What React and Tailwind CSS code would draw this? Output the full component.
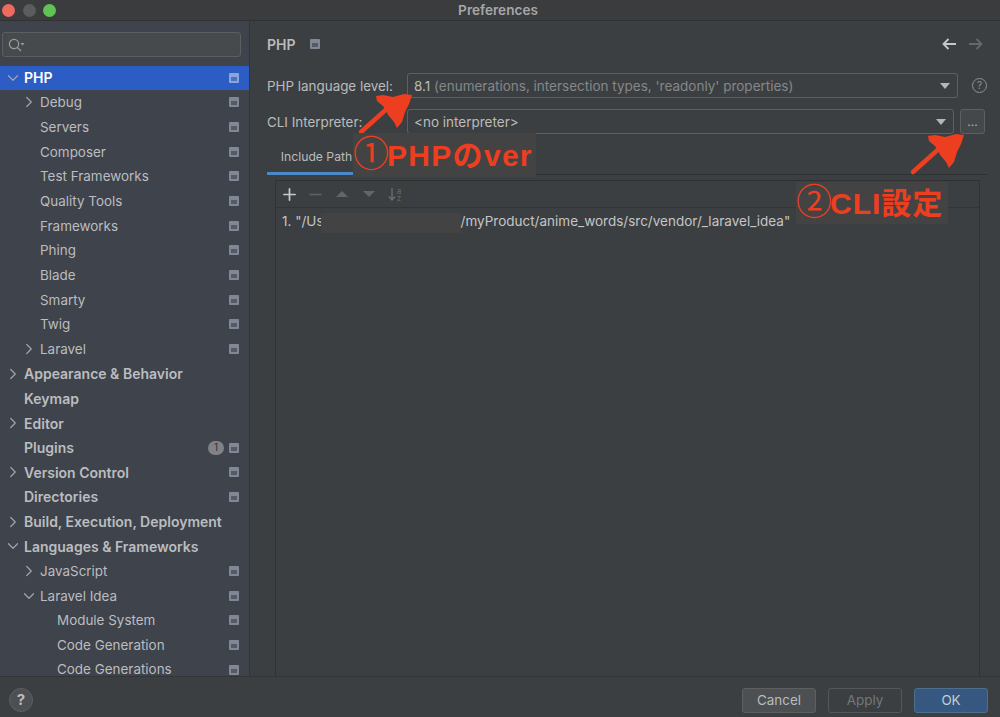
import React from "react";
import { ChevronDown, ChevronRight, Plus, Minus } from "lucide-react";

const rows = [
  { label: "PHP", depth: 0, open: true, bold: true, selected: true, page: true },
  { label: "Debug", depth: 1, closed: true, page: true },
  { label: "Servers", depth: 1, page: true },
  { label: "Composer", depth: 1, page: true },
  { label: "Test Frameworks", depth: 1, page: true },
  { label: "Quality Tools", depth: 1, page: true },
  { label: "Frameworks", depth: 1, page: true },
  { label: "Phing", depth: 1, page: true },
  { label: "Blade", depth: 1, page: true },
  { label: "Smarty", depth: 1, page: true },
  { label: "Twig", depth: 1, page: true },
  { label: "Laravel", depth: 1, closed: true, page: true },
  { label: "Appearance & Behavior", depth: 0, closed: true, bold: true },
  { label: "Keymap", depth: 0, bold: true },
  { label: "Editor", depth: 0, closed: true, bold: true },
  { label: "Plugins", depth: 0, bold: true, page: true, badge: "1" },
  { label: "Version Control", depth: 0, closed: true, bold: true, page: true },
  { label: "Directories", depth: 0, bold: true, page: true },
  { label: "Build, Execution, Deployment", depth: 0, closed: true, bold: true },
  { label: "Languages & Frameworks", depth: 0, open: true, bold: true },
  { label: "JavaScript", depth: 1, closed: true, page: true },
  { label: "Laravel Idea", depth: 1, open: true, page: true },
  { label: "Module System", depth: 2, page: true },
  { label: "Code Generation", depth: 2, page: true },
  { label: "Code Generations", depth: 2, page: true },
];

const PageIcon = ({ selected }) => (
  <span className={`flex h-[10px] w-[10px] items-center justify-center rounded-[1px] ${selected ? "bg-[#8ba5dc]" : "bg-[#7f8894]"}`}>
    <span className={`mt-[2px] h-[4px] w-[6px] ${selected ? "bg-[#4a72c8]" : "bg-[#555a64]"}`} />
  </span>
);

const TreeRow = ({ row }) => {
  const pad = row.depth === 0 ? "pl-[24px]" : row.depth === 1 ? "pl-[40px]" : "pl-[57px]";
  const arrow = row.depth === 0 ? "left-[4px]" : "left-[20px]";
  return (
    <div className={`relative flex h-[24.67px] shrink-0 items-center pr-[10px] ${pad} ${row.selected ? "bg-[#2c5dc4] text-white" : "text-[#bbbdc0]"}`}>
      {row.open && <ChevronDown size={18} strokeWidth={1.6} className={`absolute ${arrow} text-[#a0a4ab]`} />}
      {row.closed && <ChevronRight size={18} strokeWidth={1.6} className={`absolute ${arrow} text-[#a0a4ab]`} />}
      <span className={`flex-1 whitespace-nowrap ${row.bold ? "text-[14px] font-semibold" : "text-[13.45px]"}`}>{row.label}</span>
      {row.badge && (
        <span className="mr-[5px] flex h-[14px] w-[16px] items-center justify-center rounded-full bg-[#7f8389] text-[10px] text-[#2f3136]">
          {row.badge}
        </span>
      )}
      {row.page && <PageIcon selected={row.selected} />}
    </div>
  );
};

const Select = ({ children, className }) => (
  <div className={`flex h-[25px] items-center rounded-[3px] border border-[#5e6060] bg-[#3c3f41] pl-[6px] pr-[7px] text-[13.5px] ${className}`}>
    <span className="flex-1 whitespace-nowrap pt-[1px]">{children}</span>
    <span className="h-0 w-0 border-x-[5px] border-t-[6px] border-x-transparent border-t-[#b4b6b8]" />
  </div>
);

const NavArrow = ({ className, back }) => (
  <svg width="14" height="12" viewBox="0 0 14 12" fill="none" stroke="currentColor" strokeWidth="1.8" className={className}>
    {back ? <path d="M14 6H1.5 M6.5 1L1.5 6l5 5" /> : <path d="M0 6h12.5 M7.5 1l5 5-5 5" />}
  </svg>
);

// scribbled red arrow, tip at the top right
const RedArrow = ({ className }) => (
  <svg viewBox="0 0 60 44" className={`absolute h-[44px] w-[60px] ${className}`}>
    <path d="M5 40 L34 14" stroke="#ee3e20" strokeWidth="4.5" strokeLinecap="round" fill="none" />
    <path d="M20 4 L27 3 L37 5 L48 2 L56 3 L53 12 L49 20 L46 30 L41 36 L38 30 L33 24 L27 14 L21 9 Z" fill="#ee3e20" />
  </svg>
);

export default function App() {
  return (
    <div className="relative flex h-[717px] w-[1000px] flex-col overflow-hidden bg-[#3c3f41] font-['Inter',sans-serif] text-[#bbbbbb]">
      {/* title bar */}
      <div className="relative flex h-[21px] shrink-0 items-center justify-center border-b border-[#2f3133] bg-[#3a3c3e] pr-[4px]">
        <div className="absolute left-[2px] top-[3.5px] flex gap-[7.5px]">
          <span className="h-[13px] w-[13px] rounded-full bg-[#ee6a5e]" />
          <span className="h-[13px] w-[13px] rounded-full bg-[#5a5c5e]" />
          <span className="h-[13px] w-[13px] rounded-full bg-[#5fc454]" />
        </div>
        <span className="text-[13.6px] font-semibold text-[#a5a7a9]">Preferences</span>
      </div>

      <div className="flex min-h-0 flex-1">
        {/* sidebar */}
        <aside className="flex w-[250px] shrink-0 flex-col overflow-hidden border-r border-[#323436] bg-[#3f434b]">
          <div className="px-[2px] pb-[8.5px] pt-[11px]">
            <div className="flex h-[25px] w-[239px] items-center rounded-[3px] border border-[#5c5f60] bg-[#474a4c] pl-[5px]">
              <svg width="17" height="14" viewBox="0 0 17 14" fill="none" stroke="#9a9da0" strokeWidth="1.2">
                <circle cx="6" cy="6" r="4.6" />
                <path d="M9.5 9.5 L13 13" />
                <path d="M12.5 5 h4 l-2 2.5 z" fill="#9a9da0" stroke="none" />
              </svg>
            </div>
          </div>
          {rows.map((row) => (
            <TreeRow key={row.label} row={row} />
          ))}
        </aside>

        {/* main panel */}
        <main className="flex min-w-0 flex-1 flex-col pl-[17px] pr-[12px] pt-[13px]">
          <div className="flex h-[20px] items-center">
            <span className="text-[14px] font-semibold">PHP</span>
            <span className="ml-[14px]"><PageIcon /></span>
            <NavArrow back className="ml-auto text-[#c8c9ca]" />
            <NavArrow className="ml-[13px] mr-[5px] text-[#66686a]" />
          </div>

          <div className="mt-[19px] flex items-center">
            <span className="w-[140px] whitespace-nowrap pt-[1px] text-[13.4px]">PHP language level:</span>
            <Select className="w-[551px]">
              <span>8.1</span> <span className="text-[#85878a]">(enumerations, intersection types, 'readonly' properties)</span>
            </Select>
            <span className="ml-[14px] flex h-[15px] w-[15px] items-center justify-center rounded-full border border-[#8e9092] text-[10px] text-[#8e9092]">?</span>
          </div>

          <div className="mt-[11px] flex items-center">
            <span className="w-[140px] whitespace-nowrap pt-[1px] text-[13.4px]">CLI Interpreter:</span>
            <Select className="w-[547px]">&lt;no interpreter&gt;</Select>
            <span className="ml-[6px] flex h-[25px] w-[25px] items-end justify-center rounded-[3px] border border-[#5e6060] bg-[#45484a] pb-[5px] text-[12px] leading-none">...</span>
          </div>

          {/* tabs */}
          <div className="mt-[9px] h-[32px] shrink-0 border-b border-[#2f3133]">
            <div className="flex h-[32px] w-[98px] items-center justify-center border-b-[3px] border-[#4a88c7] pl-[1px] text-[12.2px]">
              Include Path
            </div>
          </div>

          {/* include path list */}
          <div className="ml-[8px] mr-[8px] mt-[5px] flex min-h-0 flex-1 flex-col border-x border-t border-[#2f3133]">
            <div className="flex h-[27px] shrink-0 items-center border-b border-[#323436]">
              <span className="flex w-[26.5px] justify-center"><Plus size={19} strokeWidth={2.2} className="text-[#c8c9ca]" /></span>
              <span className="flex w-[26.5px] justify-center"><Minus size={19} strokeWidth={2} className="text-[#5f6163]" /></span>
              <span className="flex w-[26.5px] justify-center"><span className="h-0 w-0 border-x-[6px] border-b-[6px] border-x-transparent border-b-[#636567]" /></span>
              <span className="flex w-[26.5px] justify-center"><span className="h-0 w-0 border-x-[6px] border-t-[6px] border-x-transparent border-t-[#636567]" /></span>
              <span className="flex w-[26.5px] justify-center">
                <svg width="15" height="15" viewBox="0 0 15 15" fill="none" stroke="#6a6c6e" strokeWidth="1.4">
                  <path d="M4 1v12 M1 9.5L4 13l3-3.5" />
                  <text x="9" y="6.5" fontSize="7.5" fill="#6a6c6e" stroke="none">a</text>
                  <text x="9" y="14" fontSize="7.5" fill="#6a6c6e" stroke="none">z</text>
                </svg>
              </span>
            </div>
            <div className="whitespace-nowrap pl-[6px] pt-[3px] text-[13.5px] leading-[20px] text-[#c4c5c6]">
              1. "/Us<span className="ml-[-3px] mt-[2px] inline-block h-[20px] w-[140px] bg-[#434343] align-top" />/myProduct/anime_words/src/vendor/_laravel_idea"
            </div>
          </div>
        </main>
      </div>

      {/* footer */}
      <div className="relative flex h-[41px] shrink-0 items-start justify-end gap-[12px] border-t border-[#323436] bg-[#3c3f41] pr-[12px] pt-[11px] text-[13.4px]">
        <span className="absolute left-[9px] top-[11px] flex h-[24px] w-[24px] items-center justify-center rounded-full border border-[#5e6060] bg-[#4d5052] text-[15px] font-bold">?</span>
        <button className="h-[25px] w-[74px] rounded-[3px] border border-[#5e6060] bg-[#4c5052]">Cancel</button>
        <button className="h-[25px] w-[74px] rounded-[3px] border border-[#555759] text-[#75777a]">Apply</button>
        <button className="h-[25px] w-[74px] rounded-[3px] border border-[#4c708c] bg-[#365880] text-[#c4cdd6]">OK</button>
      </div>

      {/* hand-drawn notes over the screenshot */}
      <RedArrow className="left-[356px] top-[92px]" />
      <RedArrow className="left-[908px] top-[132px]" />
      <div className="absolute left-[353px] top-[133px] flex h-[44px] w-[183px] items-center whitespace-nowrap bg-[#434343] font-['Liberation_Sans','Noto_Sans_CJK_JP',sans-serif] text-[30px] font-bold tracking-[1.3px] text-[#ee3e20]">
        <span className="mr-[-2px] text-[36px] font-normal tracking-normal">①</span>PHPのver
      </div>
      <div className="absolute left-[796px] top-[182px] flex h-[42px] w-[152px] items-center whitespace-nowrap bg-[#434343] font-['Liberation_Sans','Noto_Sans_CJK_JP',sans-serif] text-[30px] font-bold tracking-[1px] text-[#ee3e20]">
        <span className="mr-[-2px] text-[36px] font-normal tracking-normal">②</span>CLI設定
      </div>
    </div>
  );
}
